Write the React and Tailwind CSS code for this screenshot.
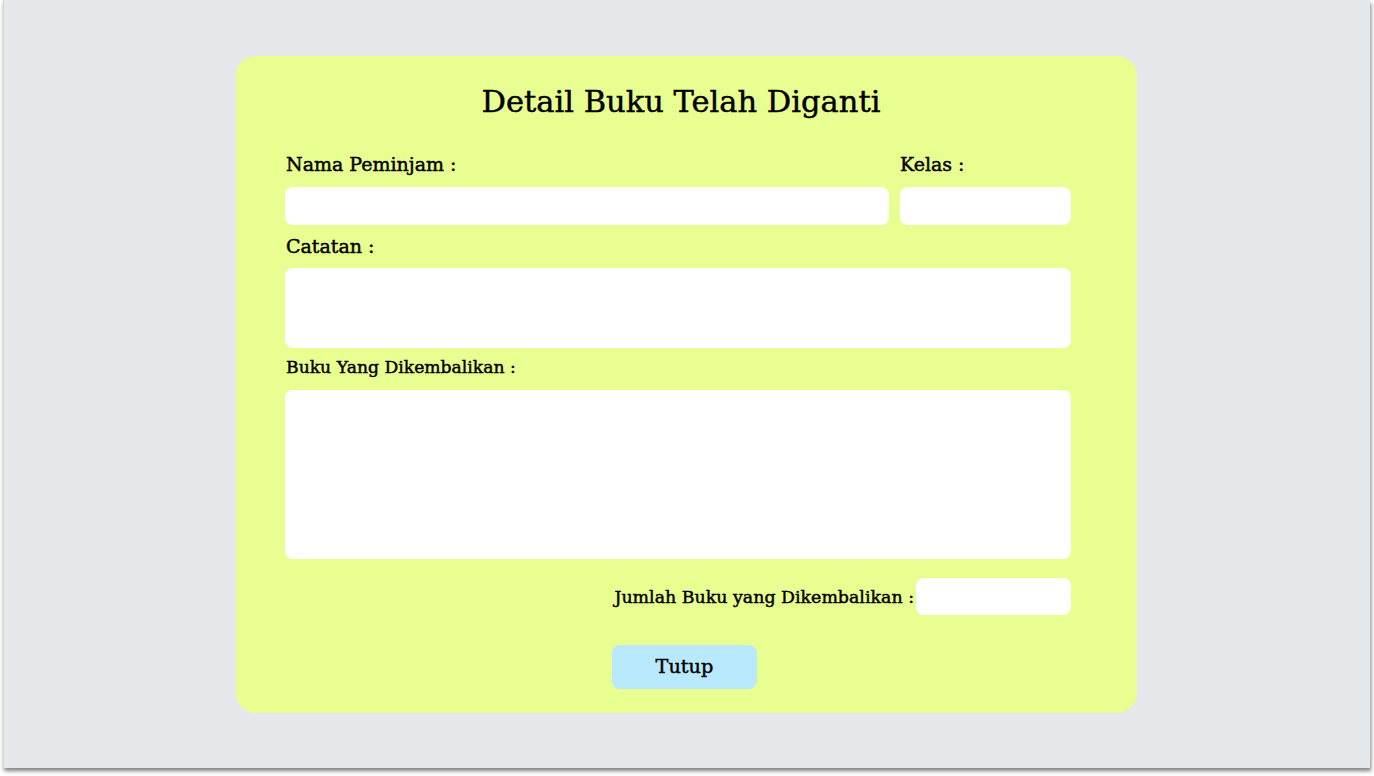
export default function App() {
  const font = { fontFamily: '"DejaVu Serif", "Liberation Serif", serif' };
  return (
    <div className="w-[1374px] h-[776px] bg-white overflow-hidden" style={font}>
      <div className="ml-[3px] w-[1367px] h-[768px] bg-[#e5e7eb] shadow-[1px_3px_4px_rgba(0,0,0,0.5)] border-l border-[#d4d4d8] pt-[56px]">
        <div className="ml-[232px] w-[901px] h-[657px] bg-[#e9fe91] rounded-[20px] pt-[26px] pl-[49px] pr-[66px] text-black [-webkit-text-stroke:0.45px_black]">
          <h1 className="text-[30.5px] leading-[40px] text-center pl-[6px]">Detail Buku Telah Diganti</h1>
          <div className="flex gap-[11px] mt-[29px]">
            <div className="flex flex-col flex-1">
              <label className="text-[19px] leading-[26px] pl-[1px]">Nama Peminjam :</label>
              <div className="mt-[10px] h-[38px] bg-white rounded-[8px]" />
            </div>
            <div className="flex flex-col w-[171px]">
              <label className="text-[19px] leading-[26px]">Kelas :</label>
              <div className="mt-[10px] h-[38px] bg-white rounded-[8px]" />
            </div>
          </div>
          <label className="block text-[19px] leading-[26px] pl-[1px] mt-[8px]">Catatan :</label>
          <div className="mt-[9px] h-[80px] bg-white rounded-[8px]" />
          <label className="block text-[17.2px] leading-[24px] pl-[1px] mt-[7px]">Buku Yang Dikembalikan :</label>
          <div className="mt-[11px] h-[169px] bg-white rounded-[8px]" />
          <div className="flex items-center justify-end mt-[19px]">
            <span className="text-[17.4px] leading-[24px]">Jumlah Buku yang Dikembalikan :</span>
            <div className="ml-[2px] w-[155px] h-[37px] bg-white rounded-[8px]" />
          </div>
          <div className="flex justify-center mt-[30px] pl-[13px]">
            <button className="w-[145px] h-[44px] bg-[#b9e9fd] rounded-[8px] text-[19.3px]">Tutup</button>
          </div>
        </div>
      </div>
    </div>
  );
}
